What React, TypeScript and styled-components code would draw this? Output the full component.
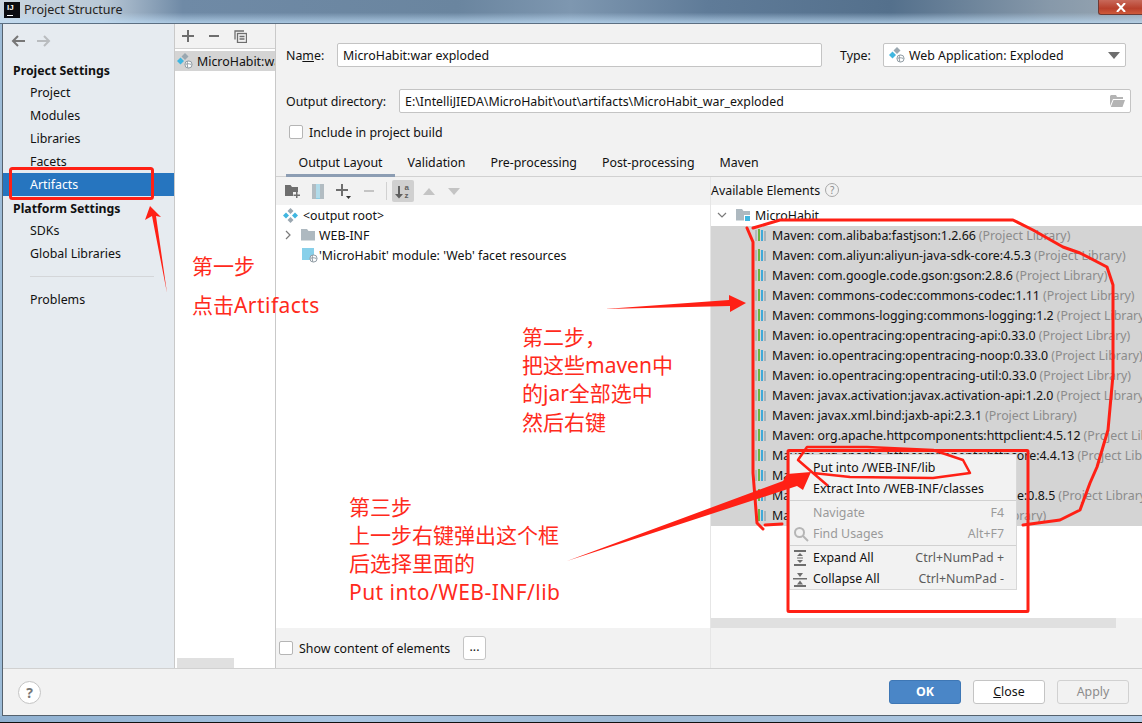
import React from "react";
import styled, { createGlobalStyle } from "styled-components";

const Global = createGlobalStyle`
  html, body { margin: 0; padding: 0; background: #fff; }
  * { box-sizing: border-box; }
  svg { flex: none; }
`;

const UI = `"Noto Sans", "Noto Sans CJK SC", sans-serif`;

const Page = styled.div`
  position: relative;
  width: 1142px;
  height: 723px;
  overflow: hidden;
  display: flex;
  flex-direction: column;
  font-family: ${UI};
  font-size: 12.38px;
  color: #111;
  background: #9dbcd8;
`;

const TitleBar = styled.div`
  height: 24px;
  flex: none;
  display: flex;
  align-items: flex-start;
  padding-left: 4px;
  border-bottom: 1px solid #5c6f82;
  background:
    linear-gradient(180deg, rgba(80, 110, 140, 0) 55%, rgba(190, 220, 245, 0.75) 100%),
    linear-gradient(90deg, #cbd6e0 0, #b9c8d6 9%, #6f8aa6 16%, #6a859f 40%, #7e97b0 50%, #5f7b98 62%, #54708c 78%, #8799aa 92%, #99a7b3 100%);
`;

const AppIcon = styled.div`
  width: 16px;
  height: 16px;
  margin-top: 2px;
  background: #0c0c10;
  color: #fff;
  font: 700 8px/9px "Liberation Sans", sans-serif;
  padding: 1px 0 0 3px;
  position: relative;
  &::after {
    content: "";
    position: absolute;
    left: 3px;
    bottom: 2px;
    width: 6px;
    height: 1px;
    background: #fff;
  }
`;

const WindowTitle = styled.div`
  margin-left: 4px;
  line-height: 20px;
  font-size: 12.5px;
  color: #222;
`;

const CloseBox = styled.div`
  margin-left: auto;
  width: 44px;
  height: 15px;
  border: 1px solid #6e3a34;
  border-top: none;
  border-right: none;
  border-radius: 0 0 0 3px;
  background: linear-gradient(180deg, #c8695a 0, #b8402c 60%, #cf5a3a 100%);
  color: #fff;
  display: flex;
  justify-content: center;
  align-items: center;
`;

const Dialog = styled.div`
  flex: 1;
  min-height: 0;
  margin-left: 2px;
  border-left: 1px solid #55626e;
  border-bottom: 1px solid #55626e;
  display: flex;
  flex-direction: column;
  background: #f2f2f2;
`;

const Body = styled.div`
  flex: 1;
  min-height: 0;
  display: flex;
`;

const Sidebar = styled.div`
  width: 172px;
  flex: none;
  background: #e6ebf0;
  border-right: 1px solid #c9c9c9;
`;

const NavArrows = styled.div`
  height: 34px;
  display: flex;
  align-items: center;
  gap: 10px;
  padding-left: 7px;
`;

const SideHeading = styled.div`
  height: 23px;
  line-height: 25px;
  padding-left: 10px;
  font-weight: 700;
  font-size: 12.3px;
`;

const SideItem = styled.div<{ $active?: boolean }>`
  height: 23px;
  line-height: 23px;
  padding-left: 27px;
  color: ${(p) => (p.$active ? "#fff" : "#111")};
  background: ${(p) => (p.$active ? "#2675bf" : "transparent")};
`;

const SideRule = styled.div`
  height: 1px;
  margin: 11px 20px 11px 27px;
  background: #d4d6d9;
`;

const Master = styled.div`
  width: 101px;
  flex: none;
  background: #fff;
  border-right: 1px solid #c9c9c9;
  display: flex;
  flex-direction: column;
`;

const MasterTools = styled.div`
  height: 25px;
  flex: none;
  background: #f2f2f2;
  border-bottom: 1px solid #d1d1d1;
  display: flex;
  align-items: center;
  gap: 14px;
  padding: 0 0 0 7px;
`;

const MasterRow = styled.div`
  margin-top: 2px;
  height: 20px;
  background: #d4d4d4;
  display: flex;
  align-items: center;
  gap: 4px;
  padding-left: 2px;
  white-space: nowrap;
  overflow: hidden;
`;

const MasterScroll = styled.div`
  margin: auto 0 0 2px;
  width: 57px;
  height: 10px;
  background: #e0e0e0;
`;

const Detail = styled.div`
  flex: 1;
  min-width: 0;
  display: flex;
  flex-direction: column;
`;

const Form = styled.div`
  flex: none;
  padding: 19px 0 0 10px;
`;

const FormRow = styled.div`
  display: flex;
  align-items: center;
  height: 24px;
  margin-bottom: 22px;
`;

const FieldLabel = styled.label<{ $w: number; $before?: number }>`
  width: ${(p) => p.$w}px;
  margin-left: ${(p) => p.$before ?? 0}px;
  flex: none;
  white-space: nowrap;
`;

const Field = styled.div<{ $w: number }>`
  width: ${(p) => p.$w}px;
  height: 24px;
  flex: none;
  background: #fff;
  border: 1px solid #c4c4c4;
  border-radius: 2px;
  display: flex;
  align-items: center;
  padding: 0 5px;
  gap: 4px;
  white-space: nowrap;
`;

const FieldEnd = styled.div`
  margin-left: auto;
  display: flex;
  align-items: center;
`;

const CheckRow = styled.div`
  display: flex;
  align-items: center;
  height: 20px;
  margin: -13px 0 12px 3px;
  gap: 6px;
`;

const Check = styled.span`
  width: 14px;
  height: 14px;
  flex: none;
  background: #fff;
  border: 1px solid #b5b5b5;
  border-radius: 2px;
`;

const Tabs = styled.div`
  height: 23px;
  flex: none;
  display: flex;
  border-bottom: 1px solid #d1d1d1;
  padding-left: 10px;
`;

const Tab = styled.div<{ $active?: boolean }>`
  padding: 0 12.5px;
  line-height: 18px;
  height: 23px;
  white-space: nowrap;
  border-bottom: 3px solid ${(p) => (p.$active ? "#8c9db3" : "transparent")};
`;

const Panes = styled.div`
  flex: 1;
  min-height: 0;
  display: flex;
`;

const LeftPane = styled.div`
  width: 435px;
  flex: none;
  display: flex;
  flex-direction: column;
  border-right: 1px solid #e6e6e6;
`;

const RightPane = styled.div`
  flex: 1;
  min-width: 0;
  display: flex;
  flex-direction: column;
`;

const PaneTools = styled.div`
  height: 28px;
  flex: none;
  display: flex;
  align-items: center;
  padding-left: 9px;
`;

const ToolSlot = styled.span<{ $w: number; $on?: boolean }>`
  width: ${(p) => p.$w}px;
  height: 22px;
  flex: none;
  display: flex;
  align-items: center;
  justify-content: center;
  border-radius: 2px;
  background: ${(p) => (p.$on ? "#d0d0d0" : "transparent")};
`;

const ToolSep = styled.span`
  width: 1px;
  height: 18px;
  background: #d1d1d1;
  margin: 0 5px 0 0;
`;

const PaneHeader = styled.div`
  height: 28px;
  flex: none;
  display: flex;
  align-items: center;
  gap: 5px;
  padding-bottom: 2px;
`;

const HelpMini = styled.span`
  width: 14px;
  height: 14px;
  border-radius: 50%;
  border: 1px solid #a8a8a8;
  color: #8a8a8a;
  font-size: 10px;
  line-height: 12px;
  text-align: center;
`;

const Tree = styled.div`
  flex: 1;
  min-height: 0;
  background: #fff;
  padding-top: 1px;
  overflow: hidden;
`;

const TreeRow = styled.div<{ $indent: number; $selected?: boolean; $gap?: number }>`
  height: 20px;
  display: flex;
  align-items: center;
  gap: ${(p) => p.$gap ?? 5}px;
  padding: 0 0 2px ${(p) => p.$indent}px;
  white-space: nowrap;
  background: ${(p) => (p.$selected ? "#d4d4d4" : "transparent")};
`;

const TwistySlot = styled.span<{ $w: number }>`
  width: ${(p) => p.$w}px;
  flex: none;
  display: flex;
  align-items: center;
`;

const Dim = styled.span`
  color: #8c8c8c;
  margin-left: 3px;
`;

const HScroll = styled.div`
  height: 10px;
  flex: none;
  margin-right: 26px;
  background: #e0e0e0;
`;

const ShowRow = styled.div`
  height: 40px;
  flex: none;
  display: flex;
  align-items: center;
  padding-left: 3px;
`;

const ShowText = styled.span`
  margin-left: 6px;
  width: 164px;
  white-space: nowrap;
`;

const Footer = styled.div`
  height: 47px;
  flex: none;
  border-top: 1px solid #d1d1d1;
  display: flex;
  align-items: center;
  padding: 0 13px 0 15px;
  gap: 12px;
`;

const HelpRound = styled.div`
  width: 23px;
  height: 23px;
  border-radius: 50%;
  background: #fff;
  border: 1px solid #c4c4c4;
  color: #777;
  font-weight: 700;
  font-size: 14px;
  line-height: 21px;
  text-align: center;
  margin-right: auto;
`;

const Btn = styled.div<{ $kind?: "primary" | "off" }>`
  width: 72px;
  height: 24px;
  line-height: 22px;
  text-align: center;
  border-radius: 3px;
  border: 1px solid ${(p) => (p.$kind === "primary" ? "#3e77b5" : p.$kind === "off" ? "#d1d1d1" : "#c4c4c4")};
  background: ${(p) => (p.$kind === "primary" ? "#4a86c7" : p.$kind === "off" ? "#f2f2f2" : "#fff")};
  color: ${(p) => (p.$kind === "primary" ? "#fff" : p.$kind === "off" ? "#8c8c8c" : "#111")};
  font-weight: ${(p) => (p.$kind === "primary" ? 700 : 400)};
`;

const SmallBtn = styled(Btn)`
  width: 23px;
  line-height: 20px;
`;

const BottomFrame = styled.div`
  height: 7px;
  flex: none;
  background: linear-gradient(90deg, #8fb0d0, #a9c6e2 30%, #9db9d4 55%, #b4cde6 100%);
  border-bottom: 1px solid #111;
`;

const Menu = styled.div`
  position: absolute;
  left: 789px;
  top: 454px;
  width: 228px;
  padding-top: 2px;
  background: #f2f2f2;
  border: 1px solid #d8d8d8;
`;

const MenuItem = styled.div<{ $off?: boolean }>`
  height: 21px;
  display: flex;
  align-items: center;
  position: relative;
  padding: 0 12px 0 23px;
  color: ${(p) => (p.$off ? "#9a9a9a" : "#111")};
`;

const MenuIcon = styled.span`
  position: absolute;
  left: 3px;
  top: 3px;
  width: 16px;
  height: 16px;
  display: flex;
`;

const MenuKey = styled.span<{ $off?: boolean }>`
  margin-left: auto;
  color: ${(p) => (p.$off ? "#9a9a9a" : "#5c5c5c")};
`;

const MenuSep = styled.div`
  height: 3px;
  border-top: 1px solid #d1d1d1;
  margin-top: 1px;
  margin-bottom: -1px;
`;

const Ink = styled.svg`
  position: absolute;
  left: 0;
  top: 0;
  pointer-events: none;
`;

const Note = styled.div<{ $x: number; $y: number }>`
  position: absolute;
  left: ${(p) => p.$x}px;
  top: ${(p) => p.$y}px;
  font-family: "Noto Sans", "Noto Sans CJK SC", sans-serif;
  font-size: 21px;
  line-height: 28.2px;
  color: #ff2a1c;
  white-space: nowrap;
`;

const NoteLatin = styled.span`
  letter-spacing: 0.45px;
`;

const Arrow = ({ dir, color }: { dir: "l" | "r"; color: string }) => (
  <svg width="16" height="14" viewBox="0 0 16 14" fill="none" stroke={color} strokeWidth="2">
    {dir === "l" ? <path d="M15 7H3M8 2 3 7l5 5" /> : <path d="M1 7h12M8 2l5 5-5 5" />}
  </svg>
);

const Plus = ({ color = "#6e6e6e" }: { color?: string }) => (
  <svg width="12" height="12" viewBox="0 0 12 12" fill={color}>
    <path d="M5 0h2v5h5v2H7v5H5V7H0V5h5z" />
  </svg>
);

const Minus = ({ color = "#6e6e6e" }: { color?: string }) => (
  <svg width="12" height="12" viewBox="0 0 12 12" fill={color}>
    <rect x="1" y="5" width="10" height="2" />
  </svg>
);

const CopyIcon = () => (
  <svg width="13" height="13" viewBox="0 0 13 13" fill="none" stroke="#6e6e6e" strokeWidth="1.3">
    <path d="M1 9.5V1h9" />
    <rect x="3.5" y="3.5" width="9" height="9" fill="#f2f2f2" />
    <path d="M5.5 6.5h5M5.5 9h5" />
  </svg>
);

const Diamonds = () => (
  <svg width="15" height="15" viewBox="0 0 15 15">
    <path d="M7.5 0 10.5 3 7.5 6 4.5 3z" fill="#9aa7b0" />
    <path d="M3 4.5 6 7.5 3 10.5 0 7.5z" fill="#40b6e0" />
    <path d="M12 4.5 15 7.5 12 10.5 9 7.5z" fill="#40b6e0" />
    <path d="M7.5 9 10.5 12 7.5 15 4.5 12z" fill="#9aa7b0" />
  </svg>
);

const Globe = () => (
  <g fill="#fff" stroke="#8f9ba3" strokeWidth="1">
    <circle cx="11.5" cy="11.5" r="3.6" />
    <path d="M8.5 11.5c2 -1 3 -1 6 0M11 8c-1 2-1 4 0 7" fill="none" />
  </g>
);

const WebArtifact = () => (
  <svg width="16" height="16" viewBox="0 0 16 16">
    <path d="M8 0 11.5 3.5 8 7 4.5 3.5z" fill="#9aa7b0" />
    <path d="M3.5 4.5 7 8 3.5 11.5 0 8z" fill="#40b6e0" />
    <Globe />
  </svg>
);

const Chevron = ({ open }: { open?: boolean }) => (
  <svg width="10" height="10" viewBox="0 0 10 10" fill="none" stroke="#7a7a7a" strokeWidth="1.2">
    {open ? <path d="M1 3l4 4 4-4" /> : <path d="M3 1l4 4-4 4" />}
  </svg>
);

const Folder = ({ module }: { module?: boolean }) => (
  <svg width="15" height="14" viewBox="0 0 15 14">
    <path d="M0 1h6l1.5 2H14v9.5H0z" fill="#aeb9c0" />
    {module && <rect x="8.5" y="7.5" width="6" height="6" fill="#40b6e0" stroke="#fff" />}
  </svg>
);

const WebFacet = () => (
  <svg width="16" height="16" viewBox="0 0 16 16">
    <rect x="0" y="1" width="12" height="12" fill="#88d0ea" />
    <Globe />
  </svg>
);

const LibIcon = () => (
  <svg width="12" height="12" viewBox="0 0 12 12">
    <rect x="0" y="1" width="2" height="11" fill="#b2b9bd" />
    <rect x="3" y="0" width="2" height="12" fill="#6db33f" />
    <rect x="6" y="1" width="2" height="11" fill="#40a9d8" />
    <rect x="9" y="2" width="2" height="10" fill="#a9b3b9" />
  </svg>
);

const FolderOpen = () => (
  <svg width="15" height="12" viewBox="0 0 15 12" fill="#b4b4b4">
    <path d="M1 0h5l1 2h6v2H3L0 11V1zM3.5 5H15l-2.5 7H.8z" />
  </svg>
);

const Caret = ({ color = "#6e6e6e", up }: { color?: string; up?: boolean }) => (
  <svg width="12" height="7" viewBox="0 0 12 7" fill={color}>
    {up ? <path d="M6 0l6 7H0z" /> : <path d="M0 0h12L6 7z" />}
  </svg>
);

const NewFolder = () => (
  <svg width="15" height="14" viewBox="0 0 15 14">
    <path d="M0 1h5.5l1.5 2h6v5H8v4H0z" fill="#6e6e6e" />
    <path d="M11 8h1.5v2.5H15V12h-2.5v2H11v-2H8.500v-1.500H11z" fill="#6e6e6e" />
  </svg>
);

const Zip = () => (
  <svg width="12" height="15" viewBox="0 0 12 15">
    <rect width="12" height="15" fill="#b2bcc2" />
    <rect x="4" width="4" height="15" fill="#8ccbe2" />
    <path d="M4 1h4M4 3h4M4 5h4M4 7h4M4 9h4M4 11h4M4 13h4" stroke="#eaf4f8" strokeWidth="0.8" />
  </svg>
);

const AddDrop = () => (
  <svg width="16" height="16" viewBox="0 0 16 16">
    <path d="M5 1h2v5h5v2H7v5H5V8H0V6h5z" fill="#6e6e6e" />
    <path d="M10 13h5l-2.500 3z" fill="#333" />
  </svg>
);

const SortAz = () => (
  <svg width="18" height="16" viewBox="0 0 18 16" fill="#5f5f5f">
    <path d="M4 3h2v8h3l-4 4.500L1 11h3z" />
    <text x="10.500" y="7" fontSize="8" fontWeight="700" fontFamily="Liberation Sans">a</text>
    <text x="10.500" y="15" fontSize="8" fontWeight="700" fontFamily="Liberation Sans">z</text>
  </svg>
);

const SearchGlyph = () => (
  <svg width="16" height="16" viewBox="0 0 16 16" fill="none" stroke="#b5b5b5" strokeWidth="2">
    <circle cx="6.500" cy="6.500" r="4.500" />
    <path d="M10 10l5 5" />
  </svg>
);

const ExpandGlyph = () => (
  <svg width="14" height="16" viewBox="0 0 14 16" fill="#6e6e6e">
    <rect x="1" y="0" width="12" height="2" />
    <rect x="1" y="14" width="12" height="2" />
    <path d="M7 3l3 3H4zM7 13l-3-3h6z" />
    <rect x="4" y="7.500" width="6" height="1" />
  </svg>
);

const CollapseGlyph = () => (
  <svg width="14" height="16" viewBox="0 0 14 16" fill="#6e6e6e">
    <rect x="0" y="7" width="14" height="1.500" />
    <path d="M7 6 4 2h6zM7 9.500l3 4H4z" />
    <rect x="1" y="14" width="12" height="2" />
  </svg>
);

const libs: string[] = [
  "Maven: com.alibaba:fastjson:1.2.66",
  "Maven: com.aliyun:aliyun-java-sdk-core:4.5.3",
  "Maven: com.google.code.gson:gson:2.8.6",
  "Maven: commons-codec:commons-codec:1.11",
  "Maven: commons-logging:commons-logging:1.2",
  "Maven: io.opentracing:opentracing-api:0.33.0",
  "Maven: io.opentracing:opentracing-noop:0.33.0",
  "Maven: io.opentracing:opentracing-util:0.33.0",
  "Maven: javax.activation:javax.activation-api:1.2.0",
  "Maven: javax.xml.bind:jaxb-api:2.3.1",
  "Maven: org.apache.httpcomponents:httpclient:4.5.12",
  "Maven: org.apache.httpcomponents:httpcore:4.4.13",
  "Maven: org.ini4j:ini4j:0.5",
  "Maven: org.apache.commons:common-line:0.8.5",
  "Maven: org.slf4j:slf4j-api:1.7.25",
];

const tabNames = ["Output Layout", "Validation", "Pre-processing", "Post-processing", "Maven"];

export default function App() {
  return (
    <Page>
      <Global />
      <TitleBar>
        <AppIcon>IJ</AppIcon>
        <WindowTitle>Project Structure</WindowTitle>
        <CloseBox>
          <svg width="10" height="9" viewBox="0 0 10 9" stroke="#fff" strokeWidth="2">
            <path d="M1 0l8 9M9 0 1 9" />
          </svg>
        </CloseBox>
      </TitleBar>
      <Dialog>
        <Body>
          <Sidebar>
            <NavArrows>
              <Arrow dir="l" color="#777" />
              <Arrow dir="r" color="#b9bcbf" />
            </NavArrows>
            <SideHeading>Project Settings</SideHeading>
            <SideItem>Project</SideItem>
            <SideItem>Modules</SideItem>
            <SideItem>Libraries</SideItem>
            <SideItem>Facets</SideItem>
            <SideItem $active>Artifacts</SideItem>
            <SideHeading>Platform Settings</SideHeading>
            <SideItem>SDKs</SideItem>
            <SideItem>Global Libraries</SideItem>
            <SideRule />
            <SideItem>Problems</SideItem>
          </Sidebar>
          <Master>
            <MasterTools>
              <Plus />
              <Minus />
              <CopyIcon />
            </MasterTools>
            <MasterRow>
              <WebArtifact />
              MicroHabit:war exploded
            </MasterRow>
            <MasterScroll />
          </Master>
          <Detail>
            <Form>
              <FormRow>
                <FieldLabel $w={51}>
                  Na<u>m</u>e:
                </FieldLabel>
                <Field $w={485}>MicroHabit:war exploded</Field>
                <FieldLabel $w={43} $before={18}>
                  Type:
                </FieldLabel>
                <Field $w={243}>
                  <WebArtifact />
                  Web Application: Exploded
                  <FieldEnd>
                    <Caret />
                  </FieldEnd>
                </Field>
              </FormRow>
              <FormRow>
                <FieldLabel $w={113}>Output directory:</FieldLabel>
                <Field $w={732}>
                  E:\IntelliJIEDA\MicroHabit\out\artifacts\MicroHabit_war_exploded
                  <FieldEnd>
                    <FolderOpen />
                  </FieldEnd>
                </Field>
              </FormRow>
              <CheckRow>
                <Check />
                Include in project build
              </CheckRow>
            </Form>
            <Tabs>
              {tabNames.map((t, i) => (
                <Tab key={t} $active={i === 0}>
                  {t}
                </Tab>
              ))}
            </Tabs>
            <Panes>
              <LeftPane>
                <PaneTools>
                  <ToolSlot $w={15}>
                    <NewFolder />
                  </ToolSlot>
                  <ToolSlot $w={35}>
                    <Zip />
                  </ToolSlot>
                  <ToolSlot $w={17}>
                    <AddDrop />
                  </ToolSlot>
                  <ToolSlot $w={34}>
                    <Minus color="#c4c4c4" />
                  </ToolSlot>
                  <ToolSep />
                  <ToolSlot $w={22} $on>
                    <SortAz />
                  </ToolSlot>
                  <ToolSlot $w={29}>
                    <Caret color="#c4c4c4" up />
                  </ToolSlot>
                  <ToolSlot $w={22}>
                    <Caret color="#c4c4c4" />
                  </ToolSlot>
                </PaneTools>
                <Tree>
                  <TreeRow $indent={7}>
                    <Diamonds />
                    {"<output root>"}
                  </TreeRow>
                  <TreeRow $indent={7} $gap={3}>
                    <TwistySlot $w={15}>
                      <Chevron />
                    </TwistySlot>
                    <Folder />
                    WEB-INF
                  </TreeRow>
                  <TreeRow $indent={26} $gap={1}>
                    <WebFacet />
                    'MicroHabit' module: 'Web' facet resources
                  </TreeRow>
                </Tree>
                <ShowRow>
                  <Check />
                  <ShowText>Show content of elements</ShowText>
                  <SmallBtn>...</SmallBtn>
                </ShowRow>
              </LeftPane>
              <RightPane>
                <PaneHeader>
                  Available Elements
                  <HelpMini>?</HelpMini>
                </PaneHeader>
                <Tree>
                  <TreeRow $indent={6} $gap={4}>
                    <TwistySlot $w={15}>
                      <Chevron open />
                    </TwistySlot>
                    <Folder module />
                    MicroHabit
                  </TreeRow>
                  {libs.map((name) => (
                    <TreeRow key={name} $indent={44} $selected>
                      <LibIcon />
                      <span>
                        {name}
                        <Dim>(Project Library)</Dim>
                      </span>
                    </TreeRow>
                  ))}
                </Tree>
                <HScroll />
                <ShowRow />
              </RightPane>
            </Panes>
          </Detail>
        </Body>
        <Footer>
          <HelpRound>?</HelpRound>
          <Btn $kind="primary">OK</Btn>
          <Btn>
            <u>C</u>lose
          </Btn>
          <Btn $kind="off">Apply</Btn>
        </Footer>
      </Dialog>
      <BottomFrame />

      <Menu>
        <MenuItem>Put into /WEB-INF/lib</MenuItem>
        <MenuItem>Extract Into /WEB-INF/classes</MenuItem>
        <MenuSep />
        <MenuItem $off>
          Navigate
          <MenuKey $off>F4</MenuKey>
        </MenuItem>
        <MenuItem $off>
          <MenuIcon>
            <SearchGlyph />
          </MenuIcon>
          Find Usages
          <MenuKey $off>Alt+F7</MenuKey>
        </MenuItem>
        <MenuSep />
        <MenuItem>
          <MenuIcon>
            <ExpandGlyph />
          </MenuIcon>
          Expand All
          <MenuKey>Ctrl+NumPad +</MenuKey>
        </MenuItem>
        <MenuItem>
          <MenuIcon>
            <CollapseGlyph />
          </MenuIcon>
          Collapse All
          <MenuKey>Ctrl+NumPad -</MenuKey>
        </MenuItem>
      </Menu>

      <Ink width="1142" height="723" viewBox="0 0 1142 723" fill="none" stroke="#ff2015" strokeLinejoin="round" strokeLinecap="round">
        <rect x="10.500" y="168.500" width="142" height="30" rx="2" strokeWidth="3" />
        <rect x="788" y="450.500" width="240" height="161" rx="1" strokeWidth="3" />
        <path
          strokeWidth="3"
          d="M747 228 753 242V473L757 523 763 529M765 525 782 524M753 228 780 220H1013L1033 230 1063 247 1080 253 1107 267 1113 285V375L1108 430 1097 467 1090 483 1080 510 1060 520 1023 525"
        />
        <path
          strokeWidth="2.500"
          d="M827 485 813 473 798 460 807 447H867L933 450 963 460 970 473 933 478 850 477 813 473"
        />
        <g fill="#ff2015" stroke="none">
          <path d="M167 293 156 216 161 217 150 206 145 220 152 216z" />
          <path d="M605 309 729 300 729 295 746 303 730 312 730 306z" />
          <path d="M567 561 783 481 787 474 811 472 803 490 797 486z" />
        </g>
      </Ink>

      <Note $x={192} $y={252}>第一步</Note>
      <Note $x={192} $y={291}>
        点击<NoteLatin>Artifacts</NoteLatin>
      </Note>
      <Note $x={522} $y={323}>
        第二步，
        <br />
        把这些maven中
        <br />
        的jar全部选中
        <br />
        然后右键
      </Note>
      <Note $x={349} $y={493}>
        第三步
        <br />
        上一步右键弹出这个框
        <br />
        后选择里面的
        <br />
        <NoteLatin>Put into/WEB-INF/lib</NoteLatin>
      </Note>
    </Page>
  );
}
